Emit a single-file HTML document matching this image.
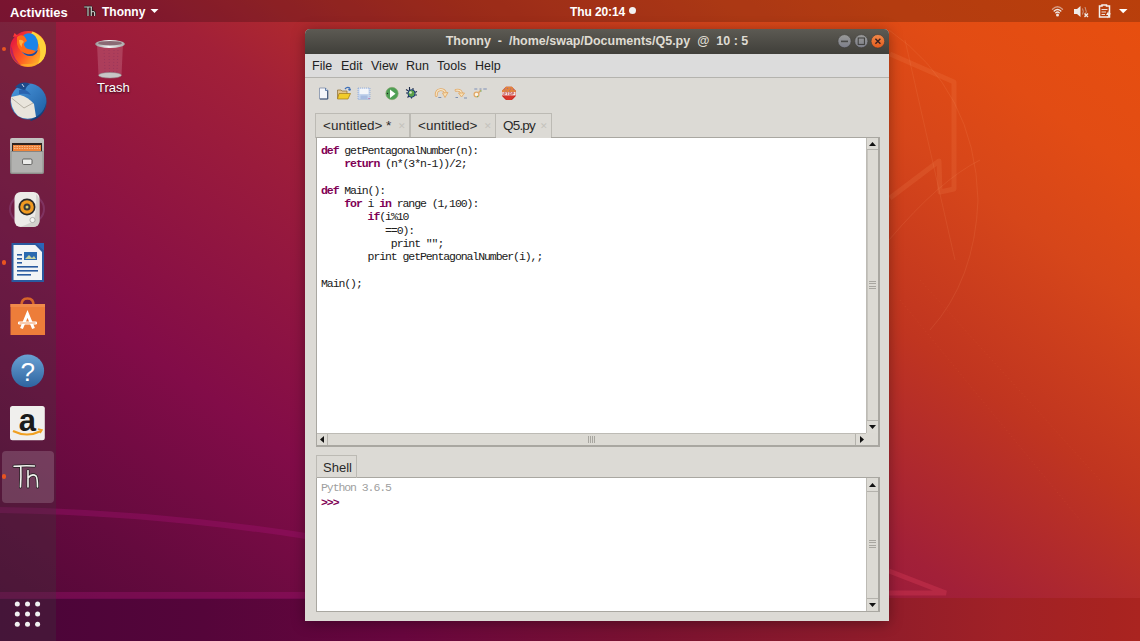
<!DOCTYPE html>
<html><head><meta charset="utf-8">
<style>
*{margin:0;padding:0;box-sizing:border-box}
html,body{width:1140px;height:641px;overflow:hidden;font-family:"Liberation Sans",sans-serif;position:relative}
div,span,svg{position:absolute}
#wall{left:0;top:0;width:1140px;height:641px;
background:linear-gradient(36deg,#4e0736 0%,#650a3e 13%,#820c48 27%,#a22038 50.8%,#c03520 65.8%,#d6461a 79%,#e24c14 88%,#e84f0e 100%)}
#wallb{left:0;top:598px;width:1140px;height:43px;background:linear-gradient(90deg,#4a0538 0px,#55053a 203px,#68063e 403px,#7a1230 653px,#8d1b2b 853px,#a02126 1003px,#a82320 1113px,#aa2420 1140px)}
#panel{left:0;top:0;width:1140px;height:22px;background:rgba(0,0,0,0.2)}
#dock{left:0;top:22px;width:56px;height:619px;background:rgba(60,60,60,0.3)}
.ptxt{color:#fff;font-weight:bold;font-size:13px;top:4px;white-space:nowrap}
#shadow{left:305px;top:29px;width:584px;height:592px;box-shadow:0 2px 14px rgba(0,0,0,0.35);border-radius:5px 5px 0 0}
#win{left:305px;top:29px;width:584px;height:592px;background:#dcdad5;border-radius:5px 5px 0 0;overflow:hidden}
#title{left:305px;top:29px;width:584px;height:25px;border-radius:5px 5px 0 0;background:linear-gradient(#5c5a53,#403f3a)}
#ttext{left:305px;width:584px;top:34px;text-align:center;color:#dfdbd2;font-weight:bold;font-size:12.5px;white-space:pre}
#menu{left:305px;top:54px;width:584px;height:24px;background:#dcdcdc;border-bottom:1px solid #b4b3ae}
.mi{top:59px;font-size:12.5px;color:#222;white-space:nowrap}
.tab{top:113px;height:25px;border:1px solid #bcbab4;border-bottom:none;background:#dad8d2;font-size:13.5px;color:#2a2a2a;white-space:nowrap}
.tab span{top:4px;position:absolute}
.x{color:#c4c2bc;font-size:9px;top:7px !important}
.frame{border:1px solid #a9a7a1;background:#fff}
.code{font-family:"Liberation Mono",monospace;font-size:11.5px;letter-spacing:-1.08px;white-space:pre;color:#202020;line-height:13.3px}
.kw{color:#7f0055;font-weight:bold;position:static}
.sbv{background:#dcdad4;border-left:1px solid #b8b6b0;border-right:1px solid #b8b6b0}
.btn{background:#dcdad4;border:1px solid #c4c2bc}
</style></head><body>
<div id="wall"></div>
<div id="wallb"></div>

<svg style="left:0;top:480px" width="1140" height="161" viewBox="0 480 1140 161">
 <path d="M0 510 Q150 512 306 536" fill="none" stroke="rgba(170,20,120,0.32)" stroke-width="6"/>
 <rect x="0" y="592" width="306" height="7" fill="rgba(170,20,120,0.32)"/>
 <path d="M889 571 L946 593 L889 593" fill="none" stroke="rgba(220,60,90,0.35)" stroke-width="5"/>
</svg>

<svg style="left:880px;top:22px" width="260" height="600" viewBox="880 22 260 600">
 <g fill="none" stroke="rgba(255,160,110,0.13)" stroke-width="5" stroke-linejoin="round">
  <path d="M890 54 L954 82 L954 189 L940 192 L939 161 L890 198"/>
 </g>
 <g fill="none" stroke="rgba(255,170,120,0.12)" stroke-width="1">
  <path d="M889 30 Q975 90 978 200 Q975 280 930 330"/>
  <path d="M905 40 Q930 150 955 260"/>
  <path d="M889 240 Q940 180 980 160"/>
 </g>
 <g fill="none" stroke="rgba(255,150,90,0.10)" stroke-width="1" stroke-dasharray="1 3">
  <path d="M900 300 L1080 520"/>
  <path d="M920 280 L1100 480"/>
 </g>
</svg>
<div id="panel"></div>
<div id="dock"></div>
<div class="ptxt" style="left:10px;top:5px">Activities</div>
<div class="ptxt" style="left:102px;top:5px;font-size:12px">Thonny</div>
<div class="ptxt" style="left:570px;top:5px;font-size:12px;letter-spacing:-0.1px">Thu 20:14</div><div style="left:629px;top:7px;width:7px;height:7px;border-radius:50%;background:#f2f2f2"></div>


<!-- panel extras -->
<svg style="left:0;top:0" width="1140" height="22" viewBox="0 0 1140 22">
 <path d="M150.5 9 H158.5 L154.5 13 Z" fill="#fff"/>
 <g fill="none" stroke="#1a1a1a" stroke-width="2.6"><path d="M84.2 7 H92 M88 7 V16 M91.3 7 V16 M91.3 12.2 Q93.8 10.5 94.6 12.8 V16"/></g>
 <g fill="none" stroke="#c8c8c4" stroke-width="1.2"><path d="M84.2 7 H92 M88 7 V16 M91.3 7 V16 M91.3 12.2 Q93.8 10.5 94.6 12.8 V16"/></g>
 <!-- wifi -->
 <g fill="none" stroke="#f0e8e4" stroke-width="1.4" stroke-linecap="round">
  <path d="M1052.5 9.2 Q1057.5 4.5 1062.5 9.2" opacity="0.55"/>
  <path d="M1054.2 11 Q1057.5 7.8 1060.8 11"/>
  <path d="M1055.8 12.7 Q1057.5 11.2 1059.2 12.7"/>
 </g>
 <circle cx="1057.5" cy="15" r="1.5" fill="#f0e8e4"/>
 <!-- speaker -->
 <path d="M1074 9 H1077 L1080.5 6 V17 L1077 14 H1074 Z" fill="#f0ebe8"/>
 <path d="M1082.5 8.5 Q1084 11.5 1082.5 14.5 M1085 7 Q1087.5 11.5 1085 16" fill="none" stroke="#c99a88" stroke-width="1"/>
 <path d="M1084.5 13.5 L1088 17 M1088 13.5 L1084.5 17" stroke="#f0ebe8" stroke-width="1.3"/>
 <!-- battery -->
 <path d="M1102 5 H1106.5 V6 H1109.5 V17 H1099.5 V6 H1102 Z" fill="none" stroke="#f4efec" stroke-width="1.5"/>
 <path d="M1101.5 9.5 H1107.5 M1101.5 12 H1106 M1101.5 14.5 H1105" stroke="#f4efec" stroke-width="0.9"/>
 <path d="M1108.5 11 L1106 15 H1108.2 L1107 18.5 L1111 13.5 H1108.8 Z" fill="#f4efec"/>
 <!-- arrow -->
 <path d="M1119 9 H1127.5 L1123.2 13.3 Z" fill="#fff"/>
</svg>

<!-- dock running indicators -->
<div style="left:1.7px;top:46.7px;width:4.6px;height:4.6px;border-radius:50%;background:#e95420"></div>
<div style="left:1.7px;top:260.2px;width:4.6px;height:4.6px;border-radius:50%;background:#e95420"></div>
<div style="left:1.5px;top:450.5px;width:52px;height:52px;border-radius:4px;background:rgba(255,255,255,0.16)"></div>
<div style="left:1.6px;top:474.1px;width:4.6px;height:4.6px;border-radius:50%;background:#e95420"></div>

<svg style="left:0;top:22px" width="56" height="619" viewBox="0 22 56 619">
 <!-- firefox -->
 <defs>
  <linearGradient id="ffo" x1="0.1" y1="0.3" x2="0.9" y2="0.8"><stop offset="0" stop-color="#e8203c"/><stop offset="0.45" stop-color="#ff5a22"/><stop offset="1" stop-color="#ffb82a"/></linearGradient>
  <radialGradient id="ffb" cx="0.5" cy="0.35" r="0.6"><stop offset="0" stop-color="#3a8fe8"/><stop offset="1" stop-color="#1a4fb0"/></radialGradient>
  <linearGradient id="tb" x1="0" y1="0" x2="1" y2="1"><stop offset="0" stop-color="#4d9ae0"/><stop offset="1" stop-color="#1a5a9e"/></linearGradient>
  <linearGradient id="hl" x1="0" y1="0" x2="0" y2="1"><stop offset="0" stop-color="#6aa2d4"/><stop offset="1" stop-color="#2e64a0"/></linearGradient>
 </defs>
 <circle cx="28" cy="49" r="18" fill="url(#ffo)"/>
 <path d="M10.5 45 Q9.5 60 22 66 Q14 60 12.5 50 Z" fill="#a8206a" opacity="0.8"/>
 <path d="M20 65 Q34 70 43 58 Q38 64 28 64 Q22 64 20 65 Z" fill="#ffb028" opacity="0.8"/>
 <path d="M32.5 31.5 Q46 37 46 50 Q45.5 60 38 64 Q42 55 39 46 Q37 39 30 36 Z" fill="#ffd43a"/>
 <ellipse cx="29" cy="44.5" rx="9.2" ry="11.2" fill="#1a84e8"/>
 <path d="M21 49 Q24 56 30 56 Q36 56 38 50 Q34 53 28 52 Q23 51 21 49 Z" fill="#1a4aa0"/>
 <path d="M17 37 Q20 34 24 36 Q26 38 27 41 Q24 42 24 45 Q25 48 28 49 Q33 50 36 51 Q33 55 27 54 Q19 52 17 44 Z" fill="#ff6a1a"/>
 <path d="M19 40 Q22 39 24 42 Q21 44 22 47 Q19 45 19 40 Z" fill="#ffb040"/>
 <path d="M13 37 L14.5 33 L18 36 Z" fill="#ff3838"/>
 <!-- thunderbird -->
 <circle cx="28.5" cy="101.5" r="18" fill="url(#tb)"/>
 <path d="M11 97 Q10 108 18 116 Q26 121 36 117 L34 104 Q28 97 20 95 Z" fill="#e9e5dc"/>
 <path d="M11.5 98 L24 108 L33 103" fill="none" stroke="#b6b0a4" stroke-width="1"/>
 <path d="M15 87 Q22 80 30 84 Q26 86 25 91 Q19 88 15 87 Z" fill="#1d4a8a"/>
 <path d="M19 90 Q26 88 31 95 Q26 93 19 94 Z" fill="#2a64b0"/>
 <path d="M30 120 Q46 114 46.5 99 Q47 116 31 121 Z" fill="#163e78"/>
 <path d="M22 84 L24 87" stroke="#fff" stroke-width="0.8"/>
 <!-- files -->
 <defs><linearGradient id="fc" x1="0" y1="0" x2="0" y2="1"><stop offset="0" stop-color="#c4c4c2"/><stop offset="1" stop-color="#8e8e8c"/></linearGradient></defs>
 <rect x="10" y="138" width="34" height="36" rx="2" fill="url(#fc)"/>
 <rect x="12" y="143" width="30" height="9" fill="#2e2420"/>
 <rect x="13" y="145" width="28" height="6" fill="#f0843a"/>
 <path d="M14 146.5 h26 M14 148.5 h26" stroke="#ffe0c0" stroke-width="0.6" stroke-dasharray="1.5 1"/>
 <rect x="11" y="151.5" width="32" height="21.5" fill="#b2b2b0" stroke="#8c8c8a" stroke-width="0.8"/>
 <rect x="22.5" y="159" width="9.5" height="5.5" rx="1.2" fill="#ececea" stroke="#555553" stroke-width="0.9"/>
 <!-- rhythmbox -->
 <ellipse cx="27" cy="209" rx="17" ry="15" fill="none" stroke="rgba(170,120,190,0.25)" stroke-width="2"/>
 <rect x="14.5" y="192" width="25" height="35" rx="6" fill="#ecebe8"/>
 <path d="M36 194 Q39.5 197 39.5 203 V221 Q39.5 226 34 227 H20 Q26 225 32 222 Q37 218 36 194 Z" fill="#c8c6c2" opacity="0.7"/>
 <circle cx="27" cy="207" r="8.5" fill="#2a2a2a"/>
 <circle cx="27" cy="207" r="6.8" fill="#f09a20"/>
 <circle cx="27" cy="207" r="3.5" fill="#3a3a3a"/>
 <circle cx="27" cy="207" r="1.5" fill="#d8d070"/>
 <circle cx="32.5" cy="220" r="2.6" fill="#f4f4f2" stroke="#9a9a98" stroke-width="0.7"/>
 <!-- libreoffice writer -->
 <path d="M11.5 243 H36 L44 251 V282 H11.5 Z" fill="#2a5aa0"/>
 <path d="M13.5 245 H35.2 L42 252 V280 H13.5 Z" fill="#f2f4f6"/>
 <path d="M35.5 243 L44 243 L44 251 Z" fill="#2a66b8"/>
 <rect x="17" y="254" width="5" height="1.6" fill="#2a5aa0"/>
 <rect x="17" y="258" width="5" height="1.6" fill="#2a5aa0"/>
 <rect x="17" y="262" width="5" height="1.6" fill="#2a5aa0"/>
 <rect x="24" y="252" width="13" height="8" fill="#2a6ab0"/>
 <path d="M25 259 L29 255 L32 258 L34 256 L36 259 Z" fill="#c8d4a0"/>
 <rect x="17" y="266" width="21" height="1.6" fill="#2a5aa0"/>
 <rect x="17" y="270" width="21" height="1.6" fill="#2a5aa0"/>
 <rect x="17" y="274" width="14" height="1.6" fill="#2a5aa0"/>
 <!-- software -->
 <path d="M21.5 306 Q21 298.5 27.5 298.5 Q34 298.5 33.5 306" fill="none" stroke="#d8652a" stroke-width="2.6"/>
 <rect x="10.5" y="304" width="34.5" height="31" fill="#ed7d3a"/>
 <rect x="10.5" y="304" width="34.5" height="3" fill="#f08a4a"/>
 <path d="M21.5 328.5 L27.5 314 L33.5 328.5" fill="none" stroke="#fff" stroke-width="3"/><rect x="18" y="321.5" width="19" height="3" rx="1.2" fill="#fff"/><path d="M19.5 323 h16" stroke="#ed7d3a" stroke-width="0.8"/>
 <!-- help -->
 <circle cx="27.7" cy="370.8" r="16.4" fill="url(#hl)"/>
 <text x="27.7" y="380.5" text-anchor="middle" font-family="Liberation Sans" font-size="26" fill="#fff">?</text>
 <!-- amazon -->
 <rect x="10" y="406" width="34.8" height="34.3" rx="2.5" fill="#f0efed"/>
 <text x="27.3" y="431" text-anchor="middle" font-family="Liberation Sans" font-weight="bold" font-size="31" fill="#1a1a1a">a</text>
 <path d="M13 431 Q27 438 41 431" fill="none" stroke="#f0a020" stroke-width="2"/>
 <path d="M38 429 L42 430 L40 433" fill="none" stroke="#f0a020" stroke-width="1.5"/>
 <!-- thonny Th -->
 <g fill="none" stroke="#202020" stroke-width="3" stroke-linecap="round">
  <path d="M14 466.3 Q24 465.5 34.5 466 M20.8 467 Q21.2 477 20.5 487 M28 470.5 V487 M28 478 Q32 473 36 476 Q37.5 478 37.5 487"/>
 </g>
 <g fill="none" stroke="#f4f4f0" stroke-width="1.6" stroke-linecap="round">
  <path d="M14 466.3 Q24 465.5 34.5 466 M20.8 467 Q21.2 477 20.5 487 M28 470.5 V487 M28 478 Q32 473 36 476 Q37.5 478 37.5 487"/>
 </g>
 <!-- grid -->
 <g fill="#f2f2f2">
  <circle cx="17.3" cy="604" r="2.5"/><circle cx="27.5" cy="604" r="2.5"/><circle cx="37.6" cy="604" r="2.5"/>
  <circle cx="17.3" cy="614.1" r="2.5"/><circle cx="27.5" cy="614.1" r="2.5"/><circle cx="37.6" cy="614.1" r="2.5"/>
  <circle cx="17.3" cy="624.3" r="2.5"/><circle cx="27.5" cy="624.3" r="2.5"/><circle cx="37.6" cy="624.3" r="2.5"/>
 </g>
</svg>

<!-- trash -->
<svg style="left:90px;top:36px" width="40" height="45" viewBox="90 36 40 45">
 <defs><linearGradient id="rim" x1="0" y1="0" x2="1" y2="0"><stop offset="0" stop-color="#9a9a9a"/><stop offset="0.45" stop-color="#f4f4f4"/><stop offset="1" stop-color="#a8a8a8"/></linearGradient></defs>
 <path d="M97 44 L98.5 75.5 Q110 79 121.5 75.5 L123 44 Z" fill="rgba(210,130,150,0.35)"/>
 <path d="M104 50 L105 72 M109 50 L109.5 73 M114 50 L113.5 73 M118 50 L117 72" stroke="rgba(120,40,90,0.35)" stroke-width="1" stroke-dasharray="1 2"/>
 <ellipse cx="110" cy="75.3" rx="11.5" ry="2.8" fill="#c8c6c6" stroke="#8a8a8a" stroke-width="0.5"/>
 <ellipse cx="110" cy="44" rx="14.8" ry="4" fill="url(#rim)"/>
 <ellipse cx="110" cy="43.2" rx="12" ry="2.3" fill="#8a6a74"/>
</svg>
<div style="left:97px;top:80px;font-size:13px;color:#fff;text-shadow:0 1px 2px rgba(0,0,0,0.7)">Trash</div>

<div id="shadow"></div>
<div id="win"></div>
<div id="title"></div>
<div id="ttext">Thonny  -  /home/swap/Documents/Q5.py  @  10 : 5</div>
<div id="menu"></div>
<div class="mi" style="left:312px">File</div>
<div class="mi" style="left:341px">Edit</div>
<div class="mi" style="left:371px">View</div>
<div class="mi" style="left:406px">Run</div>
<div class="mi" style="left:437px">Tools</div>
<div class="mi" style="left:475px">Help</div>

<div class="tab" style="left:315px;width:95px"><span style="left:7px">&lt;untitled&gt; *</span><span class="x" style="left:82px">✕</span></div>
<div class="tab" style="left:410px;width:86px"><span style="left:7px">&lt;untitled&gt;</span><span class="x" style="left:73px">✕</span></div>
<div class="tab" style="left:495px;width:57px;background:#dcdad5"><span style="left:7px;letter-spacing:-0.8px">Q5.py</span><span class="x" style="left:44px">✕</span></div>

<div class="frame" style="left:316px;top:137px;width:564px;height:310px"></div>
<div class="sbv" style="left:866px;top:138px;width:13px;height:295px"></div>
<div style="left:496px;top:137px;width:55px;height:1px;background:#dcdad5"></div>
<div class="frame" style="left:316px;top:477px;width:564px;height:135px"></div>
<div class="sbv" style="left:866px;top:478px;width:13px;height:133px"></div>

<div class="abs" style="left:316px;top:455px;width:41px;height:23px;border:1px solid #bcbab4;border-bottom:none;font-size:13px;color:#2a2a2a"><span style="left:6px;top:4px">Shell</span></div>

<div class="code" style="left:321px;top:144px"><span class="kw">def</span> getPentagonalNumber(n):
    <span class="kw">return</span> (n*(3*n-1))/2;

<span class="kw">def</span> Main():
    <span class="kw">for</span> i <span class="kw">in</span> range (1,100):
        <span class="kw">if</span>(i%10
           ==0):
            print "";
        print getPentagonalNumber(i),;

Main();</div>
<div class="code" style="left:321px;top:481px;color:#a0a0a0">Python 3.6.5</div>
<div class="code" style="left:321px;top:496px;color:#7f0055;font-weight:bold">&gt;&gt;&gt;</div>

<!-- window buttons -->
<svg style="left:835px;top:32px" width="52" height="20" viewBox="0 0 52 20">
 <defs>
  <linearGradient id="gb" x1="0" y1="0" x2="0" y2="1"><stop offset="0" stop-color="#9a9a98"/><stop offset="1" stop-color="#7c7e8a"/></linearGradient>
  <linearGradient id="go" x1="0" y1="0" x2="0" y2="1"><stop offset="0" stop-color="#f08a4a"/><stop offset="1" stop-color="#e55a1c"/></linearGradient>
 </defs>
 <circle cx="9.5" cy="9.2" r="6.6" fill="url(#gb)" stroke="#3a3935" stroke-width="0.6"/>
 <rect x="6" y="8.6" width="7" height="1.6" fill="#4a4a48"/>
 <circle cx="26.3" cy="9.2" r="6.6" fill="url(#gb)" stroke="#3a3935" stroke-width="0.6"/>
 <rect x="23.2" y="6" width="6.2" height="6.4" fill="none" stroke="#3c3c3a" stroke-width="1"/>
 <circle cx="42.9" cy="9.3" r="6.8" fill="url(#go)" stroke="#3a3935" stroke-width="0.6"/>
 <path d="M40.4 6.8 L45.4 11.8 M45.4 6.8 L40.4 11.8" stroke="#3a2020" stroke-width="1.4"/>
</svg>

<!-- editor v scrollbar -->
<div style="left:866px;top:138px;width:13px;height:295px;background:#dcdad4;border-left:1px solid #bdbbb5;border-right:1px solid #a9a7a1"></div>
<div style="left:867px;top:138px;width:11px;height:12px;background:#dddbd5;border-bottom:1px solid #b4b2ac"></div>
<div style="left:867px;top:420px;width:11px;height:13px;background:#dddbd5;border-top:1px solid #b4b2ac"></div>
<div style="left:867px;top:150px;width:1px;height:270px;background:#c6c4be"></div>
<svg style="left:867px;top:138px" width="11" height="12"><path d="M2 8 L5.5 4 L9 8 Z" fill="#111"/></svg>
<svg style="left:867px;top:421px" width="11" height="12"><path d="M2 4 L5.5 8 L9 4 Z" fill="#111"/></svg>
<div style="left:869px;top:281px;width:7px;height:1px;background:#a8a6a0"></div>
<div style="left:869px;top:283px;width:7px;height:1px;background:#a8a6a0"></div>
<div style="left:869px;top:286px;width:7px;height:1px;background:#a8a6a0"></div>
<div style="left:869px;top:288px;width:7px;height:1px;background:#a8a6a0"></div>

<!-- editor h scrollbar -->
<div style="left:317px;top:433px;width:549px;height:13px;background:#dcdad4;border-top:1px solid #bdbbb5;border-bottom:1px solid #a9a7a1"></div>
<div style="left:317px;top:434px;width:11px;height:11px;background:#dddbd5;border-right:1px solid #b4b2ac"></div>
<div style="left:855px;top:434px;width:11px;height:11px;background:#dddbd5;border-left:1px solid #b4b2ac"></div>
<svg style="left:317px;top:434px" width="11" height="11"><path d="M7 2 L3 5.5 L7 9 Z" fill="#111"/></svg>
<svg style="left:856px;top:434px" width="11" height="11"><path d="M4 2 L8 5.5 L4 9 Z" fill="#111"/></svg>
<div style="left:588px;top:436px;width:1px;height:7px;background:#a8a6a0"></div>
<div style="left:590px;top:436px;width:1px;height:7px;background:#a8a6a0"></div>
<div style="left:592px;top:436px;width:1px;height:7px;background:#a8a6a0"></div>
<div style="left:594px;top:436px;width:1px;height:7px;background:#a8a6a0"></div>
<div style="left:866px;top:433px;width:13px;height:13px;background:#dcdad4;border-right:1px solid #a9a7a1;border-bottom:1px solid #a9a7a1"></div>

<!-- shell v scrollbar -->
<div style="left:866px;top:478px;width:13px;height:133px;background:#dcdad4;border-left:1px solid #bdbbb5;border-right:1px solid #a9a7a1"></div>
<div style="left:867px;top:478px;width:11px;height:14px;background:#dddbd5;border-bottom:1px solid #b4b2ac"></div>
<div style="left:867px;top:598px;width:11px;height:13px;background:#dddbd5;border-top:1px solid #b4b2ac"></div>
<svg style="left:867px;top:479px" width="11" height="12"><path d="M2 8 L5.5 4 L9 8 Z" fill="#111"/></svg>
<svg style="left:867px;top:599px" width="11" height="12"><path d="M2 4 L5.5 8 L9 4 Z" fill="#111"/></svg>
<div style="left:869px;top:540px;width:7px;height:1px;background:#a8a6a0"></div>
<div style="left:869px;top:542px;width:7px;height:1px;background:#a8a6a0"></div>
<div style="left:869px;top:545px;width:7px;height:1px;background:#a8a6a0"></div>
<div style="left:869px;top:547px;width:7px;height:1px;background:#a8a6a0"></div>

<!-- toolbar icons -->
<svg style="left:315px;top:83px" width="210" height="20" viewBox="315 83 210 20">
 <!-- new -->
 <path d="M319.5 88 H325.5 L328 90.5 V99 H319.5 Z" fill="#f4f6fa" stroke="#7f8ea8" stroke-width="0.8"/>
 <path d="M325.5 88 V90.5 H328" fill="#c8d4e4" stroke="#4a6a9a" stroke-width="0.8"/>
 <path d="M327.6 91 V99 H320" fill="none" stroke="#3f5577" stroke-width="1"/>
 <!-- open -->
 <path d="M337.5 90 H341 L342 91 H347 V98.5 H337.5 Z" fill="#e2c48a" stroke="#8a6a30" stroke-width="0.7"/>
 <path d="M339 93.5 H350.5 L348 99 H337.5 Z" fill="#f2cc2a" stroke="#a07818" stroke-width="0.7"/>
 <path d="M345 89 Q347 86.5 350 88" fill="none" stroke="#3d6fb8" stroke-width="1.3"/>
 <circle cx="349.6" cy="89.5" r="1.3" fill="#3d6fb8"/>
 <!-- save -->
 <rect x="358" y="88" width="12" height="11.5" fill="#c4d4ec"/>
 <rect x="359.5" y="88.5" width="9" height="5.5" fill="#f4f6fa"/>
 <rect x="360.5" y="95.5" width="7" height="3.5" fill="#a8bce0"/>
 <path d="M358 88 h12 v11.5 h-12 z" fill="none" stroke="#8aa6d4" stroke-width="0.8" stroke-dasharray="1 1"/>
 <circle cx="369" cy="98.5" r="0.6" fill="#c04080"/>
 <!-- run -->
 <circle cx="392" cy="93.5" r="6.2" fill="#4f9f55" stroke="#8aa870" stroke-width="0.6"/>
 <path d="M390 89.5 L395.5 93.8 L390 98 Z" fill="#fff"/>
 <circle cx="387.5" cy="93.5" r="0.7" fill="#222"/>
 <!-- debug bug -->
 <g stroke="#1b2a48" stroke-width="1.1" fill="none">
  <path d="M409.5 87 V90 M413 88 V90.5 M406 89.5 L408.5 91 M417 91.5 L414.5 92.5 M406 93 H408 M417 95 L414.5 95 M407.5 97.5 L409 96 M411.5 98.5 V96.5"/>
 </g>
 <ellipse cx="411.5" cy="93.5" rx="3.6" ry="3.8" fill="#5aa048" stroke="#1a3a80" stroke-width="1"/>
 <ellipse cx="410.5" cy="92.5" rx="1.3" ry="1.3" fill="#d8e8c8"/>
 <!-- step over -->
 <g fill="none" stroke-linecap="round" stroke-linejoin="round">
  <path d="M436.2 95.5 Q436 90 440.5 89.6 Q444.5 89.5 445.5 93" stroke="#e2aa68" stroke-width="2.8"/>
  <path d="M436.2 95.5 Q436 90 440.5 89.6 Q444.5 89.5 445.5 93" stroke="#f6e6c8" stroke-width="1.1"/>
 </g>
 <path d="M442.5 93 L448 92.5 L445 97.5 Z" fill="#f6e0b8" stroke="#e2aa68" stroke-width="0.9"/>
 <path d="M438.3 97.5 h3" stroke="#7d8fb0" stroke-width="1"/>
 <!-- step into -->
 <g fill="none" stroke-linecap="round" stroke-linejoin="round">
  <path d="M456 90.3 Q460.5 89.5 461.5 93" stroke="#e2aa68" stroke-width="2.8"/>
  <path d="M456 90.3 Q460.5 89.5 461.5 93" stroke="#f6e6c8" stroke-width="1.1"/>
 </g>
 <path d="M458.5 93 L464.5 93 L461.5 97 Z" fill="#f6e0b8" stroke="#e2aa68" stroke-width="0.9"/>
 <path d="M455.5 97.5 h2.5 M464 98 h3" stroke="#7d8fb0" stroke-width="1"/>
 <!-- step out -->
 <circle cx="476.5" cy="94.5" r="2.4" fill="#fbf4e8" stroke="#e2aa68" stroke-width="1.3"/>
 <path d="M478.5 92.5 Q480.5 91.5 480.6 89.8" fill="none" stroke="#e2aa68" stroke-width="1.6"/>
 <circle cx="481" cy="91" r="0.7" fill="#6ab06a"/>
 <circle cx="477.5" cy="96.5" r="0.7" fill="#6ab06a"/>
 <path d="M474.3 89 h3 M479.5 89 h2 M483.3 89 h3.5" stroke="#7d8fb8" stroke-width="1"/>
 <!-- stop -->
 <path d="M506 86.8 H511.8 L515.8 90.8 V96 L511.8 100 H506 L502 96 V90.8 Z" fill="#d8342a"/>
 <path d="M506 86.8 H511.8 L515.8 90.8 V92 H502 V90.8 Z" fill="#e0843e"/>
 <path d="M504 89 h1 M507 88.5 h1 M510 89 h1 M513 89.5 h1 M505.5 91 h1 M509 90.8 h1" stroke="#9a5aa0" stroke-width="0.8"/>
 <rect x="502.3" y="92" width="13.2" height="3.4" fill="#f8f0f0"/>
 <path d="M503.6 92.6 h1.8 v1.1 h-1.8 v1.1 h1.8 M506.4 92.6 h2 M507.4 92.6 v2.4 M509.2 92.6 h1.8 v2.2 h-1.8 z M512 95 v-2.4 h1.8 v1.2 h-1.8" stroke="#b02020" stroke-width="0.55" fill="none"/>
 <path d="M503 96 L506 99.5 M515 96 L512 99.5" stroke="#a01818" stroke-width="0.5"/>
</svg>
</body></html>
